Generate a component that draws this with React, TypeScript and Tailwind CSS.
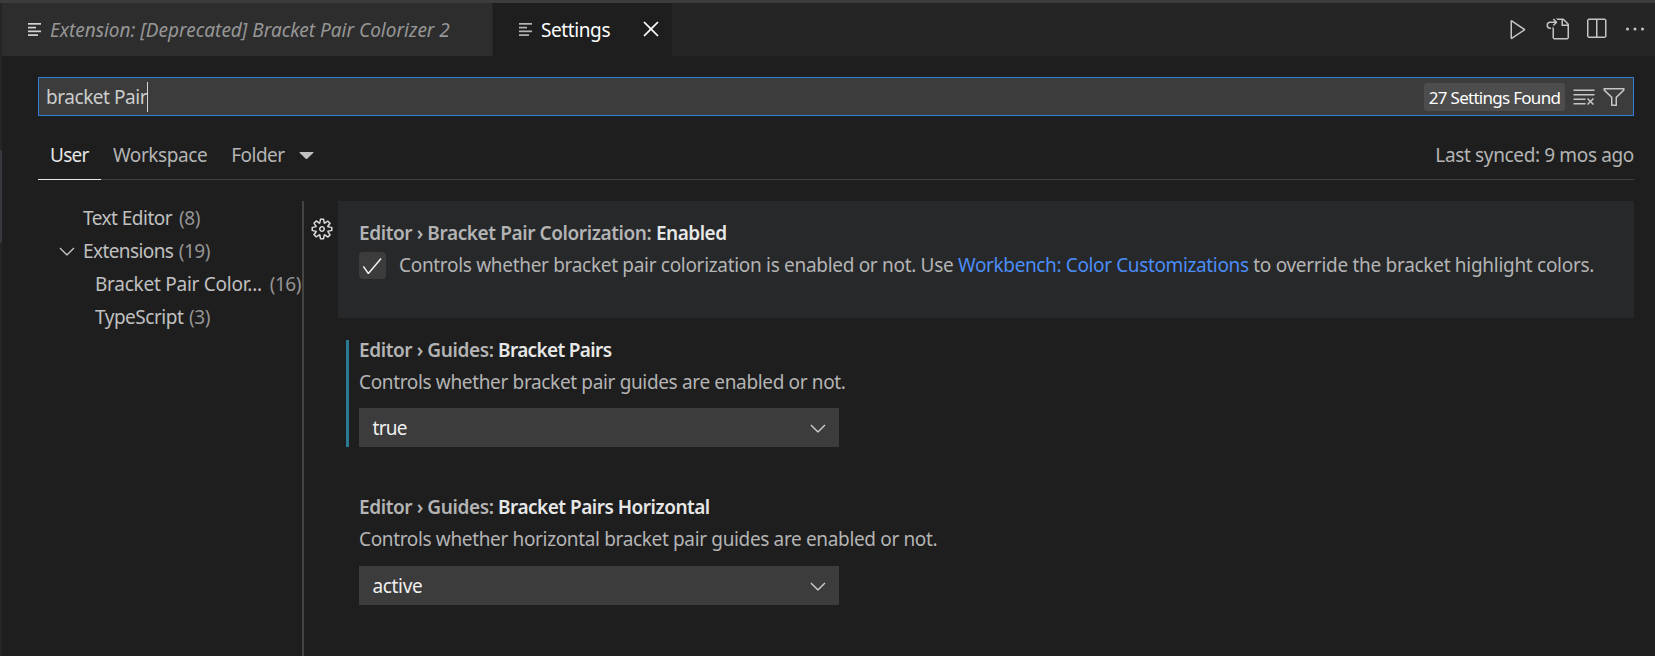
import type { ReactNode } from "react";
import {
  VscCheck,
  VscChevronDown,
  VscClearAll,
  VscClose,
  VscEllipsis,
  VscFilter,
  VscGear,
  VscGoToFile,
  VscPlay,
  VscSplitHorizontal,
  VscTriangleDown,
} from "react-icons/vsc";

function ListIcon({ className }: { className: string }) {
  return (
    <svg viewBox="0 0 13 13" className={`h-[13px] w-[13px] shrink-0 ${className}`} fill="currentColor">
      <rect x="0" y="0" width="13" height="1.7" />
      <rect x="0" y="3.75" width="8" height="1.7" />
      <rect x="0" y="7.5" width="13" height="1.7" />
      <rect x="0" y="11.25" width="10" height="1.7" />
    </svg>
  );
}

function TabBar() {
  return (
    <div className="flex h-[53px] shrink-0 bg-[#252526]">
      <div className="flex w-[491px] items-center border-r border-[#252526] bg-[#2d2d2d] pb-px pl-[26px]">
        <ListIcon className="text-[#d4d4d4]" />
        <span className="ml-[9px] pt-0.5 text-[#969696] italic">Extension: [Deprecated] Bracket Pair Colorizer 2</span>
      </div>
      <div className="flex w-[179px] items-center bg-[#1e1e1e] pb-px pl-[26px]">
        <ListIcon className="text-[#b5b5b5]" />
        <span className="ml-[9px] pt-0.5 tracking-[-0.4px] text-white">Settings</span>
        <VscClose className="ml-[27px] size-7 text-white" />
      </div>
      <div className="flex flex-1 items-center justify-end gap-[15px] pr-2 pb-px text-[#c5c5c5]">
        <VscPlay className="size-6" />
        <VscGoToFile className="size-6" />
        <VscSplitHorizontal className="size-6" />
        <VscEllipsis className="size-6" />
      </div>
    </div>
  );
}

function SearchBox() {
  return (
    <div className="flex h-[39px] items-center border border-[#2b7fd6] bg-[#3c3c3c] pr-[7px] pl-[7px]">
      <span className="pt-px tracking-[-0.45px] text-[#cccccc]">bracket Pair</span>
      <span className="h-[30px] w-px bg-[#d4d4d4]" />
      <span className="mt-px ml-auto flex h-7 w-[141px] items-center justify-center rounded-[3px] bg-[#4d4d4d] pt-px text-[17px] tracking-[-0.72px] whitespace-nowrap text-white">
        27 Settings Found
      </span>
      <VscClearAll className="ml-[7px] size-6 text-[#c5c5c5]" />
      <VscFilter className="ml-1.5 size-6 text-[#c5c5c5]" />
    </div>
  );
}

function ScopeTabs() {
  return (
    <div className="mt-[17px] flex h-[47px] border-b border-[#414141] text-[#b4b4b4]">
      <div className="-mb-px flex w-[63px] items-center border-b border-[#e7e7e7] pb-0.5 pl-3 tracking-[-0.7px] text-[#e7e7e7]">
        User
      </div>
      <div className="ml-3 flex items-center pb-0.5 tracking-[-0.42px]">Workspace</div>
      <div className="ml-6 flex items-center pb-0.5 tracking-[-0.53px]">Folder</div>
      <div className="ml-[12px] flex items-center pb-px">
        <VscTriangleDown className="size-[19px] text-[#c0c0c0]" />
      </div>
      <div className="ml-auto flex items-center pb-0.5 tracking-[-0.36px]">Last synced: 9 mos ago</div>
    </div>
  );
}

function TreeRow({ label, count, className, icon }: { label: string; count: string; className: string; icon?: ReactNode }) {
  return (
    <div className={`flex h-[33px] items-center pt-px whitespace-nowrap ${className}`}>
      {icon}
      <span className="text-[#c0c0c0]">{label}</span>
      <span className="ml-auto tracking-[-0.45px] text-[#949494]">{count}</span>
    </div>
  );
}

function Tree() {
  return (
    <nav className="w-[266px] shrink-0 border-r-2 border-[#444444]">
      <TreeRow label="Text Editor" count="(8)" className="ml-[45px] w-[117px] tracking-[-0.52px]" />
      <TreeRow
        label="Extensions"
        count="(19)"
        className="ml-[17px] w-[155px] tracking-[-0.6px]"
        icon={<VscChevronDown className="mr-1 size-6 text-[#c5c5c5]" />}
      />
      <TreeRow label="Bracket Pair Color..." count="(16)" className="ml-[57px] w-[206px] tracking-[-0.25px]" />
      <TreeRow label="TypeScript" count="(3)" className="ml-[57px] w-[115px] tracking-[-0.48px]" />
    </nav>
  );
}

function Heading({ category, name, nameClass }: { category: string; name: string; nameClass: string }) {
  return (
    <h2 className="flex h-8 items-center font-semibold whitespace-pre text-[#b4b4b4]">
      <span className="tracking-[-0.4px]">{category} </span>
      <span className={`text-[#e7e7e7] ${nameClass}`}>{name}</span>
    </h2>
  );
}

function Select({ value, className }: { value: string; className: string }) {
  return (
    <div className={`flex h-[39px] w-[480px] shrink-0 items-center justify-between bg-[#3c3c3c] pt-px pr-[9px] pl-[13.5px] text-[#f0f0f0] ${className}`}>
      <span>{value}</span>
      <VscChevronDown className="size-6 text-[#d0d0d0]" />
    </div>
  );
}

export default function App() {
  return (
    <div className="flex h-[656px] w-[1655px] flex-col overflow-hidden bg-[#1e1e1e] font-['Noto_Sans','Open_Sans',sans-serif] text-[19px] leading-[26px] text-[#b4b4b4]">
      <div className="h-[3px] shrink-0 bg-[#3c3c3c]" />
      <div className="flex min-h-0 flex-1">
        <div className="flex w-0.5 flex-col bg-[#252526] pt-[147px]">
          <div className="h-[93px] bg-[#37373d]" />
        </div>
        <div className="flex min-w-0 flex-1 flex-col">
          <TabBar />
          <div className="flex min-h-0 flex-1 flex-col pt-[21px] pr-[21px] pl-9">
            <SearchBox />
            <ScopeTabs />
            <div className="mt-[21px] flex min-h-0 flex-1">
              <Tree />
              <div className="flex w-[34px] shrink-0 justify-center pt-4 pl-px">
                <VscGear className="size-6 text-[#d8d8d8]" />
              </div>
              <main className="min-w-0 flex-1">
                <section className="h-[117px] bg-[#26282a] pt-4 pl-[21px]">
                  <Heading category="Editor › Bracket Pair Colorization:" name="Enabled" nameClass="tracking-[-0.5px]" />
                  <div className="flex h-8">
                    <span className="mt-[3px] flex size-[27px] items-center justify-center rounded-[4px] bg-[#3c3c3c] pr-px">
                      <VscCheck className="size-6 text-[#f0f0f0]" />
                    </span>
                    <p className="ml-[13px] leading-8 whitespace-pre">
                      <span className="tracking-[-0.31px]">Controls whether bracket pair colorization is enabled or not. Use </span>
                      <a className="tracking-[-0.37px] text-[#4b8df8]">Workbench: Color Customizations</a>
                      <span className="tracking-[-0.29px]"> to override the bracket highlight colors.</span>
                    </p>
                  </div>
                </section>
                <section className="mt-[22px] ml-2 flex h-[107px] flex-col border-l-[3px] border-[#2a7a96] pl-[10px]">
                  <div className="-mt-[6px]">
                    <Heading category="Editor › Guides:" name="Bracket Pairs" nameClass="tracking-[-0.65px]" />
                  </div>
                  <p className="h-8 leading-8 tracking-[-0.35px]">Controls whether bracket pair guides are enabled or not.</p>
                  <Select value="true" className="mt-[10px] tracking-[-0.7px]" />
                </section>
                <section className="mt-[44px] pl-[21px]">
                  <Heading category="Editor › Guides:" name="Bracket Pairs Horizontal" nameClass="tracking-[-0.5px]" />
                  <p className="h-8 leading-8 tracking-[-0.35px]">Controls whether horizontal bracket pair guides are enabled or not.</p>
                  <Select value="active" className="mt-[11px] tracking-[-0.35px]" />
                </section>
              </main>
            </div>
          </div>
        </div>
      </div>
    </div>
  );
}
